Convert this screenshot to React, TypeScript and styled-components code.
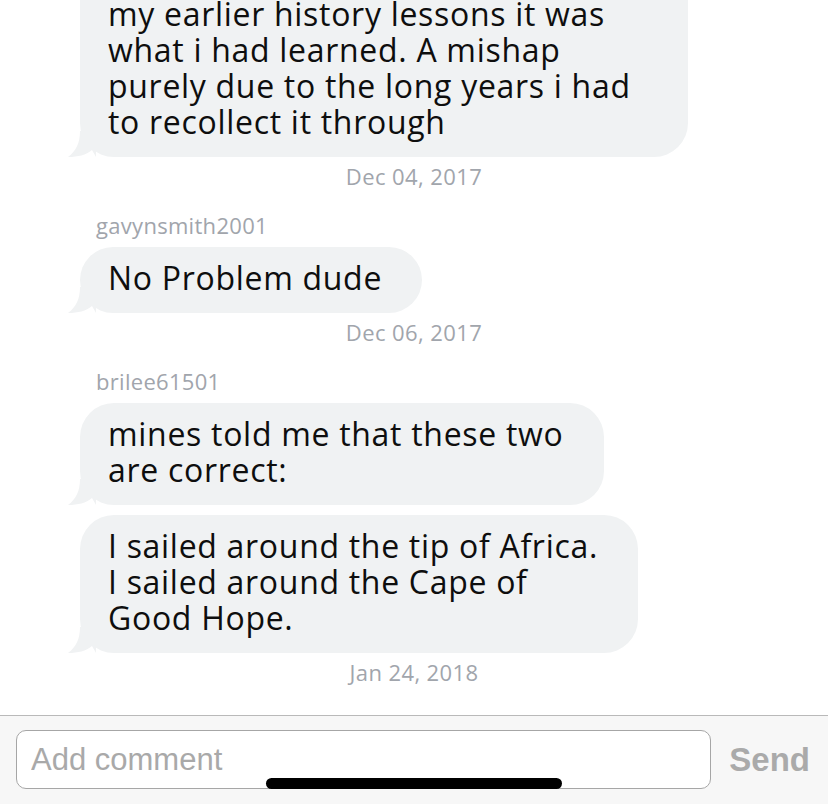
import React from "react";
import styled, { createGlobalStyle } from "styled-components";

const GlobalStyle = createGlobalStyle`
  html, body {
    margin: 0;
    padding: 0;
    background: #ffffff;
  }
  body {
    font-family: "Open Sans", "Lato", sans-serif;
  }
`;

const Screen = styled.div`
  width: 828px;
  height: 804px;
  display: flex;
  flex-direction: column;
  overflow: hidden;
  position: relative;
`;

const Thread = styled.div`
  flex: 1;
  min-height: 0;
  overflow: hidden;
  display: flex;
  flex-direction: column;
  justify-content: flex-end;
  padding: 0 0 29px 0;
`;

const Group = styled.div<{ $gapTop?: number }>`
  display: flex;
  flex-direction: column;
  align-items: flex-start;
  gap: 10px;
  padding-left: 80px;
  margin-top: ${(p) => p.$gapTop ?? 0}px;
`;

const Author = styled.div`
  font-size: 22px;
  line-height: 26px;
  letter-spacing: 0.3px;
  color: #a1a5ac;
  margin: 22px 0 0 96px;
`;

const Bubble = styled.div`
  position: relative;
  background: #f0f2f3;
  color: #0e0e0e;
  font-size: 32px;
  line-height: 36px;
  letter-spacing: 0.7px;
  padding: 13px 40px 17px 28px;
  border-radius: 34px;
  flex-shrink: 0;
`;

const Tail = styled.svg`
  position: absolute;
  left: -12px;
  bottom: 0;
  width: 28px;
  height: 26px;
`;

const Stamp = styled.div`
  text-align: center;
  font-size: 22px;
  line-height: 26px;
  letter-spacing: 0.4px;
  color: #a1a5ac;
  margin-top: 6px;
  padding-bottom: 1px;
`;

const Composer = styled.div`
  flex-shrink: 0;
  box-sizing: border-box;
  height: 89px;
  border-top: 1px solid #b9b9b9;
  background: #f7f7f7;
  display: flex;
  align-items: flex-start;
  padding: 14px 18px 0 16px;
  gap: 18px;
`;

const Field = styled.input`
  flex: 1;
  height: 59px;
  box-sizing: border-box;
  border: 1px solid #a6a6a6;
  border-radius: 10px;
  background: #ffffff;
  padding: 0 14px;
  font-family: "Liberation Sans", Arial, sans-serif;
  font-size: 31px;
  color: #222;
  outline: none;
  &::placeholder {
    color: #a9a9a9;
  }
`;

const Send = styled.button`
  border: none;
  background: none;
  padding: 0;
  height: 59px;
  font-family: "Liberation Sans", Arial, sans-serif;
  font-weight: 700;
  font-size: 33px;
  color: #aaaaaa;
`;

const HomeBar = styled.div`
  position: absolute;
  left: 266px;
  bottom: 15px;
  width: 296px;
  height: 11px;
  border-radius: 6px;
  background: #000000;
`;

const BubbleTail = () => (
  <Tail viewBox="0 0 28 26">
    <path d="M12 0 C12 12 8 20 0 26 C10 26 18 24 24 19 L28 26 L28 0 Z" fill="#f0f2f3" />
  </Tail>
);

type Msg = { lines: string[]; tail?: boolean };

const Message = ({ lines, tail }: Msg) => (
  <Bubble>
    {lines.map((l, i) => (
      <React.Fragment key={i}>
        {i > 0 && <br />}
        {l}
      </React.Fragment>
    ))}
    {tail && <BubbleTail />}
  </Bubble>
);

export default function App() {
  return (
    <Screen>
      <GlobalStyle />
      <Thread>
        <Group>
          <Message
            tail
            lines={[
              "Yes i thought so too, because from",
              "my earlier history lessons it was",
              "what i had learned. A mishap",
              "purely due to the long years i had",
              "to recollect it through",
            ]}
          />
        </Group>
        <Stamp>Dec 04, 2017</Stamp>

        <Author>gavynsmith2001</Author>
        <Group $gapTop={9}>
          <Message tail lines={["No Problem dude"]} />
        </Group>
        <Stamp>Dec 06, 2017</Stamp>

        <Author>brilee61501</Author>
        <Group $gapTop={9}>
          <Message tail lines={["mines told me that these two", "are correct:"]} />
          <Message
            tail
            lines={["I sailed around the tip of Africa.", "I sailed around the Cape of", "Good Hope."]}
          />
        </Group>
        <Stamp>Jan 24, 2018</Stamp>
      </Thread>
      <Composer>
        <Field placeholder="Add comment" />
        <Send>Send</Send>
      </Composer>
      <HomeBar />
    </Screen>
  );
}
